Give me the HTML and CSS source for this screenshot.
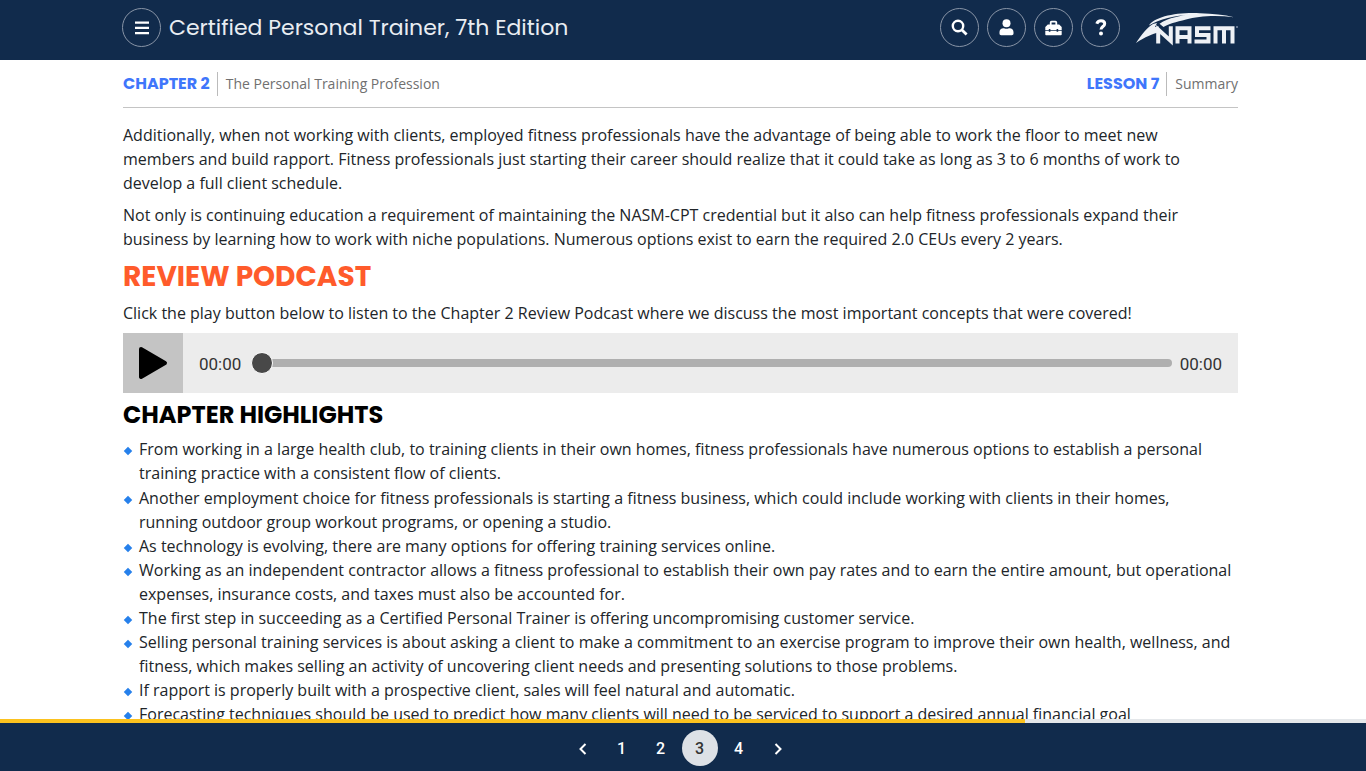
FILE: index.html
```html
<!DOCTYPE html>
<html lang="en">
<head>
<meta charset="utf-8">
<meta name="viewport" content="width=device-width, initial-scale=1">
<title>Certified Personal Trainer, 7th Edition</title>
<link rel="stylesheet" href="styles.css">
</head>
<body>
<header class="topbar">
  <button class="round" type="button" aria-label="Menu">
    <svg width="16" height="14" viewBox="0 0 16 14"><path d="M1 1.7h14M1 6.9h14M1 12.1h14" stroke="currentColor" stroke-width="2.2" fill="none"/></svg>
  </button>
  <h1 class="title">Certified Personal Trainer, 7th Edition</h1>
  <div class="tools">
    <button class="round" type="button" aria-label="Search">
      <svg width="17" height="17" viewBox="0 0 17 17" fill="none" stroke="currentColor"><circle cx="7" cy="7" r="5.2" stroke-width="2.4"/><path d="M11 11l4.6 4.6" stroke-width="2.8"/></svg>
    </button>
    <button class="round" type="button" aria-label="Profile">
      <svg width="15" height="17" viewBox="0 0 15 17" fill="currentColor"><circle cx="7.5" cy="4.2" r="4"/><path d="M.5 14.5V13c0-2.300 1.700-3.800 3.900-3.800.9 0 1.500.6 3.100.6s2.200-.6 3.100-.6c2.200 0 3.900 1.500 3.900 3.800v1.500c0 1-.7 1.700-1.700 1.700H2.200c-1 0-1.700-.7-1.700-1.700z"/></svg>
    </button>
    <button class="round" type="button" aria-label="Toolbox">
      <svg width="17" height="16" viewBox="0 0 17 16"><path d="M5.700 5V2.600c0-.6.3-.9.900-.9h3.800c.6 0 .9.300.9.900V5" fill="none" stroke="currentColor" stroke-width="1.800"/><path fill="currentColor" d="M2.800 4.500h11.400L16.700 7v3h-3.500V9h-1.600v1H5.400V9H3.800v1H.3V7zM.3 10.800h3.500v1h1.600v-1h6.200v1h1.600v-1h3.500v3.600c0 .5-.3.800-.8.800H1.100c-.5 0-.8-.3-.8-.8z"/></svg>
    </button>
    <button class="round" type="button" aria-label="Help">
      <svg width="12" height="17" viewBox="0 0 12 17"><path d="M1.800 4.800C2.500 2.600 4 1.700 6 1.700c2.300 0 3.700 1.200 3.700 3 0 2.800-3.700 2.800-3.700 5.900" fill="none" stroke="currentColor" stroke-width="3"/><circle cx="6" cy="14.500" r="2" fill="currentColor"/></svg>
    </button>
    <svg class="logo" width="104" height="34" viewBox="0 0 104 34" role="img" aria-label="NASM">
      <g fill="#eef1f5">
        <path d="M0 31C6 22 11 15.500 17 12l4-1-2 4c2 0 2.800-.4 3.500-1v6.500C17 21.500 9 25 0 31z"/>
        <path d="M13 13.500C18 5 40 0 64 1.200c13 .6 24 1.400 34 4C80 3 62 4 50 7.500 40 10 32 12 27.500 15l-4-3.200C33 5.500 45 3.500 55 2.800 39 3.600 23 7 13 13.500z"/>
      </g>
      <g fill="none" stroke="#eef1f5" stroke-width="4">
        <path d="M22.200 31.500V17.500L34.800 29V14.200"/>
        <path d="M41.500 31.500V16.300H53.500V31.500M41.500 25H53.500"/>
        <path d="M74.500 16.300H61V22.900H72.500V29.500H58.500"/>
        <path d="M79.500 31.500V16.300H96.500V31.500M88 16.300V31.500"/>
      </g>
      <circle cx="101" cy="15" r="1" fill="#8290a8"/>
    </svg>
  </div>
</header>

<div class="crumbs">
  <div class="crumb"><strong class="crumb-key">CHAPTER 2</strong><span class="crumb-name">The Personal Training Profession</span></div>
  <div class="crumb"><strong class="crumb-key">LESSON 7</strong><span class="crumb-name">Summary</span></div>
</div>

<main class="content">
  <p>Additionally, when not working with clients, employed fitness professionals have the advantage of being able to work the floor to meet new<br>members and build rapport. Fitness professionals just starting their career should realize that it could take as long as 3 to 6 months of work to develop a full client schedule.</p>
  <p>Not only is continuing education a requirement of maintaining the NASM-CPT credential but it also can help fitness professionals expand their business by learning how to work with niche populations. Numerous options exist to earn the required 2.0 CEUs every 2 years.</p>
  <h2 class="podcast-title">REVIEW PODCAST</h2>
  <p>Click the play button below to listen to the Chapter 2 Review Podcast where we discuss the most important concepts that were covered!</p>
  <div class="player">
    <button class="play" type="button" aria-label="Play">
      <svg width="30" height="34" viewBox="0 0 30 34"><path d="M3 3l24 14L3 31z" stroke="#000" stroke-width="4" stroke-linejoin="round"/></svg>
    </button>
    <span class="time">00:00</span>
    <input class="seek" type="range" min="0" max="100" value="0" aria-label="Seek">
    <span class="time">00:00</span>
  </div>
  <h3 class="highlights-title">CHAPTER HIGHLIGHTS</h3>
  <ul class="highlights">
    <li>From working in a large health club, to training clients in their own homes, fitness professionals have numerous options to establish a personal training practice with a consistent flow of clients.</li>
    <li>Another employment choice for fitness professionals is starting a fitness business, which could include working with clients in their homes,<br>running outdoor group workout programs, or opening a studio.</li>
    <li>As technology is evolving, there are many options for offering training services online.</li>
    <li>Working as an independent contractor allows a fitness professional to establish their own pay rates and to earn the entire amount, but operational expenses, insurance costs, and taxes must also be accounted for.</li>
    <li>The first step in succeeding as a Certified Personal Trainer is offering uncompromising customer service.</li>
    <li>Selling personal training services is about asking a client to make a commitment to an exercise program to improve their own health, wellness, and fitness, which makes selling an activity of uncovering client needs and presenting solutions to those problems.</li>
    <li>If rapport is properly built with a prospective client, sales will feel natural and automatic.</li>
    <li>Forecasting techniques should be used to predict how many clients will need to be serviced to support a desired annual financial goal</li>
  </ul>
</main>

<footer class="footer">
  <div class="progress"><div class="progress-fill" style="width: 75%"></div></div>
  <nav class="pager" aria-label="Pages">
    <a class="page" href="#prev" aria-label="Previous"><svg width="10" height="12" viewBox="0 0 10 12"><path d="M7.500 1L2.500 6l5 5" fill="none" stroke="currentColor" stroke-width="2"/></svg></a>
    <a class="page" href="#1">1</a>
    <a class="page" href="#2">2</a>
    <a class="page current" href="#3" aria-current="page">3</a>
    <a class="page" href="#4">4</a>
    <a class="page" href="#next" aria-label="Next"><svg width="10" height="12" viewBox="0 0 10 12"><path d="M2.500 1l5 5-5 5" fill="none" stroke="currentColor" stroke-width="2"/></svg></a>
  </nav>
</footer>
</body>
</html>
```
FILE: styles.css
```css
* { box-sizing: border-box; }

body {
  margin: 0;
  height: 100vh;
  display: flex;
  flex-direction: column;
  overflow: hidden;
  background: #fff;
  color: #212529;
  font: 16px/24px "Open Sans", "Noto Sans", sans-serif;
}

.topbar {
  flex: none;
  display: flex;
  align-items: center;
  height: 60px;
  padding: 0 126px 5px 122px;
  background: #112b4c;
  color: #fff;
}

.round {
  display: flex;
  align-items: center;
  justify-content: center;
  width: 39px;
  height: 39px;
  padding: 0;
  border: 1px solid #8894a6;
  border-radius: 50%;
  background: transparent;
  color: #fff;
}

.title {
  margin: 0 0 0 8px;
  color: #e9edf2;
  font: 400 22px/32px Poppins, Inter, sans-serif;
}

.tools {
  display: flex;
  align-items: center;
  gap: 8px;
  margin-left: auto;
}

.logo { margin: 2px 0 0 8px; }

.crumbs {
  flex: none;
  display: flex;
  justify-content: space-between;
  margin: 0 128px 0 123px;
  padding: 12px 0 11px;
  border-bottom: 1px solid #c4c4c4;
}

.crumb { display: flex; }

.crumb-key {
  padding-right: 7px;
  border-right: 1px solid #bbb;
  color: #3f76fb;
  font: 700 16px/24px Poppins, Inter, sans-serif;
}

.crumb-name {
  padding-left: 8px;
  color: #707070;
  font-size: 14px;
}

.content {
  flex: 1;
  min-height: 0;
  overflow: hidden;
  padding: 15px 128px 0 123px;
}

.content p { margin: 0 0 8px; }

.podcast-title {
  margin: 8px 0 6px;
  color: #ff5b2b;
  font: 700 28px/36px Poppins, Inter, sans-serif;
}

.player {
  display: flex;
  align-items: center;
  height: 60px;
  padding-right: 16px;
  background: #ececec;
}

.play {
  display: flex;
  align-items: center;
  justify-content: center;
  width: 60px;
  height: 60px;
  margin-right: 16px;
  padding: 0;
  border: 0;
  background: #c4c4c4;
}

.time {
  padding-top: 2px;
  color: #333;
  font: 17px/24px Roboto, sans-serif;
}

.seek {
  flex: 1;
  min-width: 0;
  height: 24px;
  margin: 0 8px 0 10px;
  appearance: none;
  background: transparent;
}

.seek::-webkit-slider-runnable-track {
  height: 8px;
  border-radius: 4px;
  background: #afafaf;
}

.seek::-webkit-slider-thumb {
  appearance: none;
  width: 22px;
  height: 22px;
  margin-top: -7px;
  border: 1px solid #fff;
  border-radius: 50%;
  background: #484848;
}

.highlights-title {
  margin: 8px 0;
  color: #000;
  font: 700 24px/28px Poppins, Inter, sans-serif;
}

.highlights {
  margin: 0;
  padding: 0;
  list-style: none;
}

.highlights li {
  position: relative;
  padding-left: 16px;
}

.highlights li:nth-child(2) { margin-top: 1px; }

.highlights li::before {
  content: "";
  position: absolute;
  top: 11px;
  left: 2px;
  width: 6px;
  height: 6px;
  background: #2680eb;
  transform: rotate(45deg);
}

.footer {
  flex: none;
  background: #112b4c;
}

.progress {
  height: 4px;
  background: #e4e7ea;
}

.progress-fill {
  height: 100%;
  background: #fbc21f;
}

.pager {
  display: flex;
  justify-content: center;
  gap: 3px;
  padding: 7px 6px 5px 0;
}

.page {
  display: flex;
  align-items: center;
  justify-content: center;
  width: 36px;
  height: 36px;
  padding-top: 1px;
  border-radius: 50%;
  color: #fff;
  font: 500 16px/24px Roboto, sans-serif;
  text-decoration: none;
}

.current {
  background: #dde1e6;
  color: #333;
}
```
